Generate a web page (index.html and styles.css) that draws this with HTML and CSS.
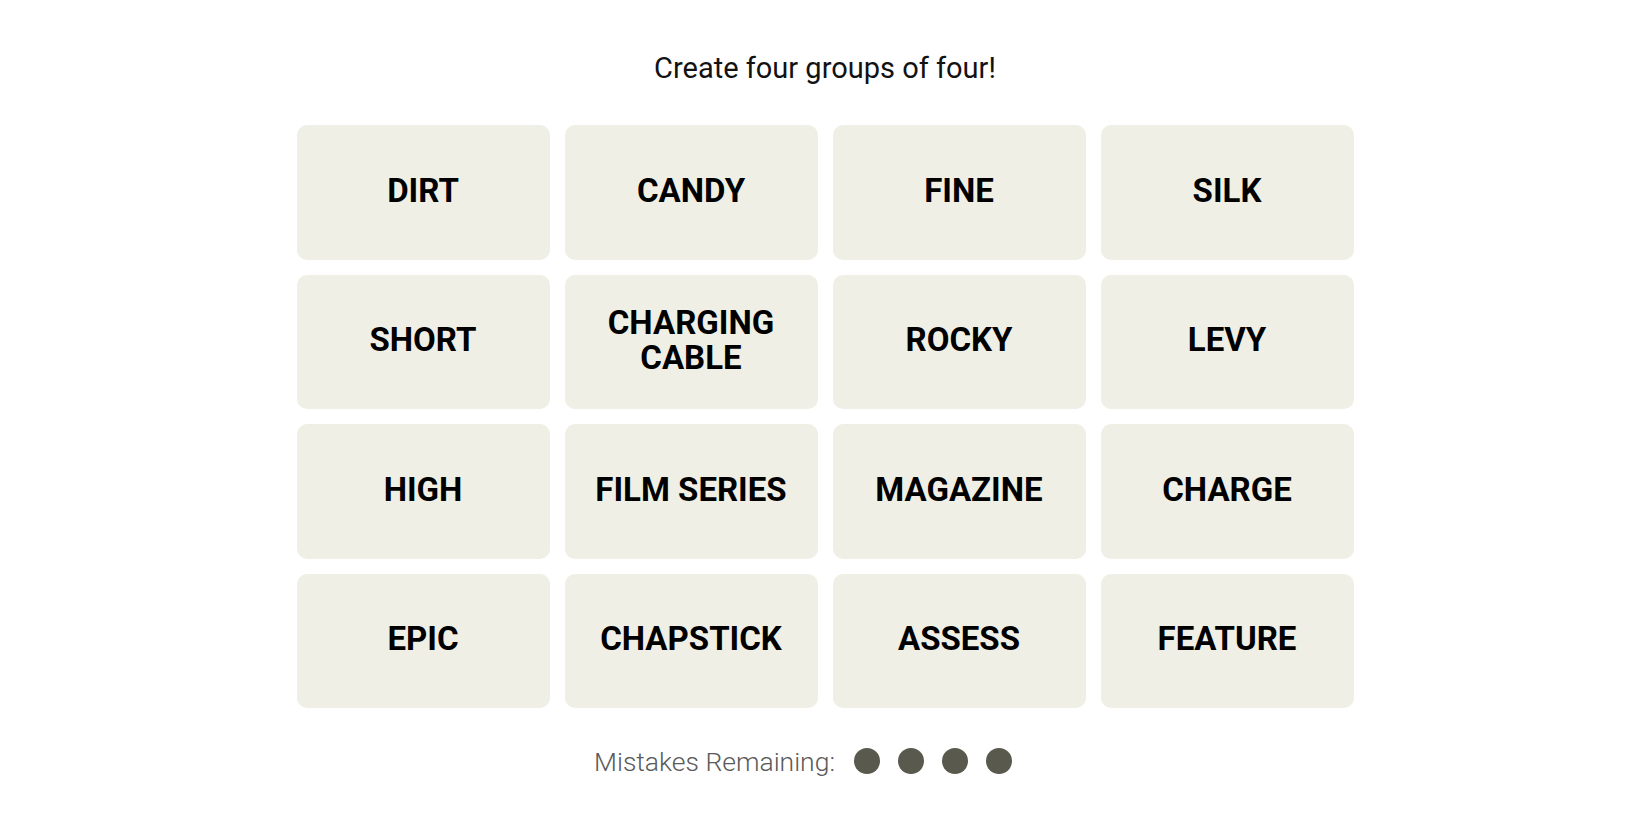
FILE: index.html
```html
<!DOCTYPE html>
<html lang="en">
<head>
<meta charset="utf-8">
<title>Connections</title>
<link rel="stylesheet" href="styles.css">
</head>
<body>
<main class="game">
  <p class="prompt">Create four groups of four!</p>
  <section class="board">
    <div class="tile">DIRT</div>
    <div class="tile">CANDY</div>
    <div class="tile">FINE</div>
    <div class="tile">SILK</div>
    <div class="tile">SHORT</div>
    <div class="tile">CHARGING<br>CABLE</div>
    <div class="tile">ROCKY</div>
    <div class="tile">LEVY</div>
    <div class="tile">HIGH</div>
    <div class="tile">FILM SERIES</div>
    <div class="tile">MAGAZINE</div>
    <div class="tile">CHARGE</div>
    <div class="tile">EPIC</div>
    <div class="tile">CHAPSTICK</div>
    <div class="tile">ASSESS</div>
    <div class="tile">FEATURE</div>
  </section>
  <div class="mistakes">
    <span class="mistakes-label">Mistakes Remaining:</span>
    <span class="dots">
      <span class="dot"></span>
      <span class="dot"></span>
      <span class="dot"></span>
      <span class="dot"></span>
    </span>
  </div>
</main>
</body>
</html>
```

FILE: styles.css
```css
html, body {
  margin: 0;
  padding: 0;
  background: #ffffff;
}

.game {
  display: flex;
  flex-direction: column;
  align-items: center;
  padding-top: 52px;
  font-family: Roboto, "Liberation Sans", sans-serif;
}

.prompt {
  margin: 0 0 41px;
  font-size: 29px;
  line-height: 32px;
  font-weight: 400;
  color: #121212;
}

.board {
  display: grid;
  grid-template-columns: repeat(4, 253px);
  grid-auto-rows: 134.5px;
  gap: 15px;
}

.tile {
  display: flex;
  align-items: center;
  justify-content: center;
  text-align: center;
  background: #efefe6;
  border-radius: 10px;
  padding-bottom: 4px;
  box-sizing: border-box;
  font-size: 33px;
  line-height: 35px;
  font-weight: 700;
  color: #000000;
}

.mistakes {
  display: flex;
  align-items: center;
  margin-top: 37px;
  height: 32px;
  padding-right: 44px;
}

.mistakes-label {
  font-size: 26.5px;
  font-weight: 300;
  color: #5a5a5a;
  margin-right: 19px;
}

.dots {
  display: flex;
  gap: 18px;
}

.dot {
  width: 26px;
  height: 26px;
  border-radius: 50%;
  background: #5a594e;
}
```
